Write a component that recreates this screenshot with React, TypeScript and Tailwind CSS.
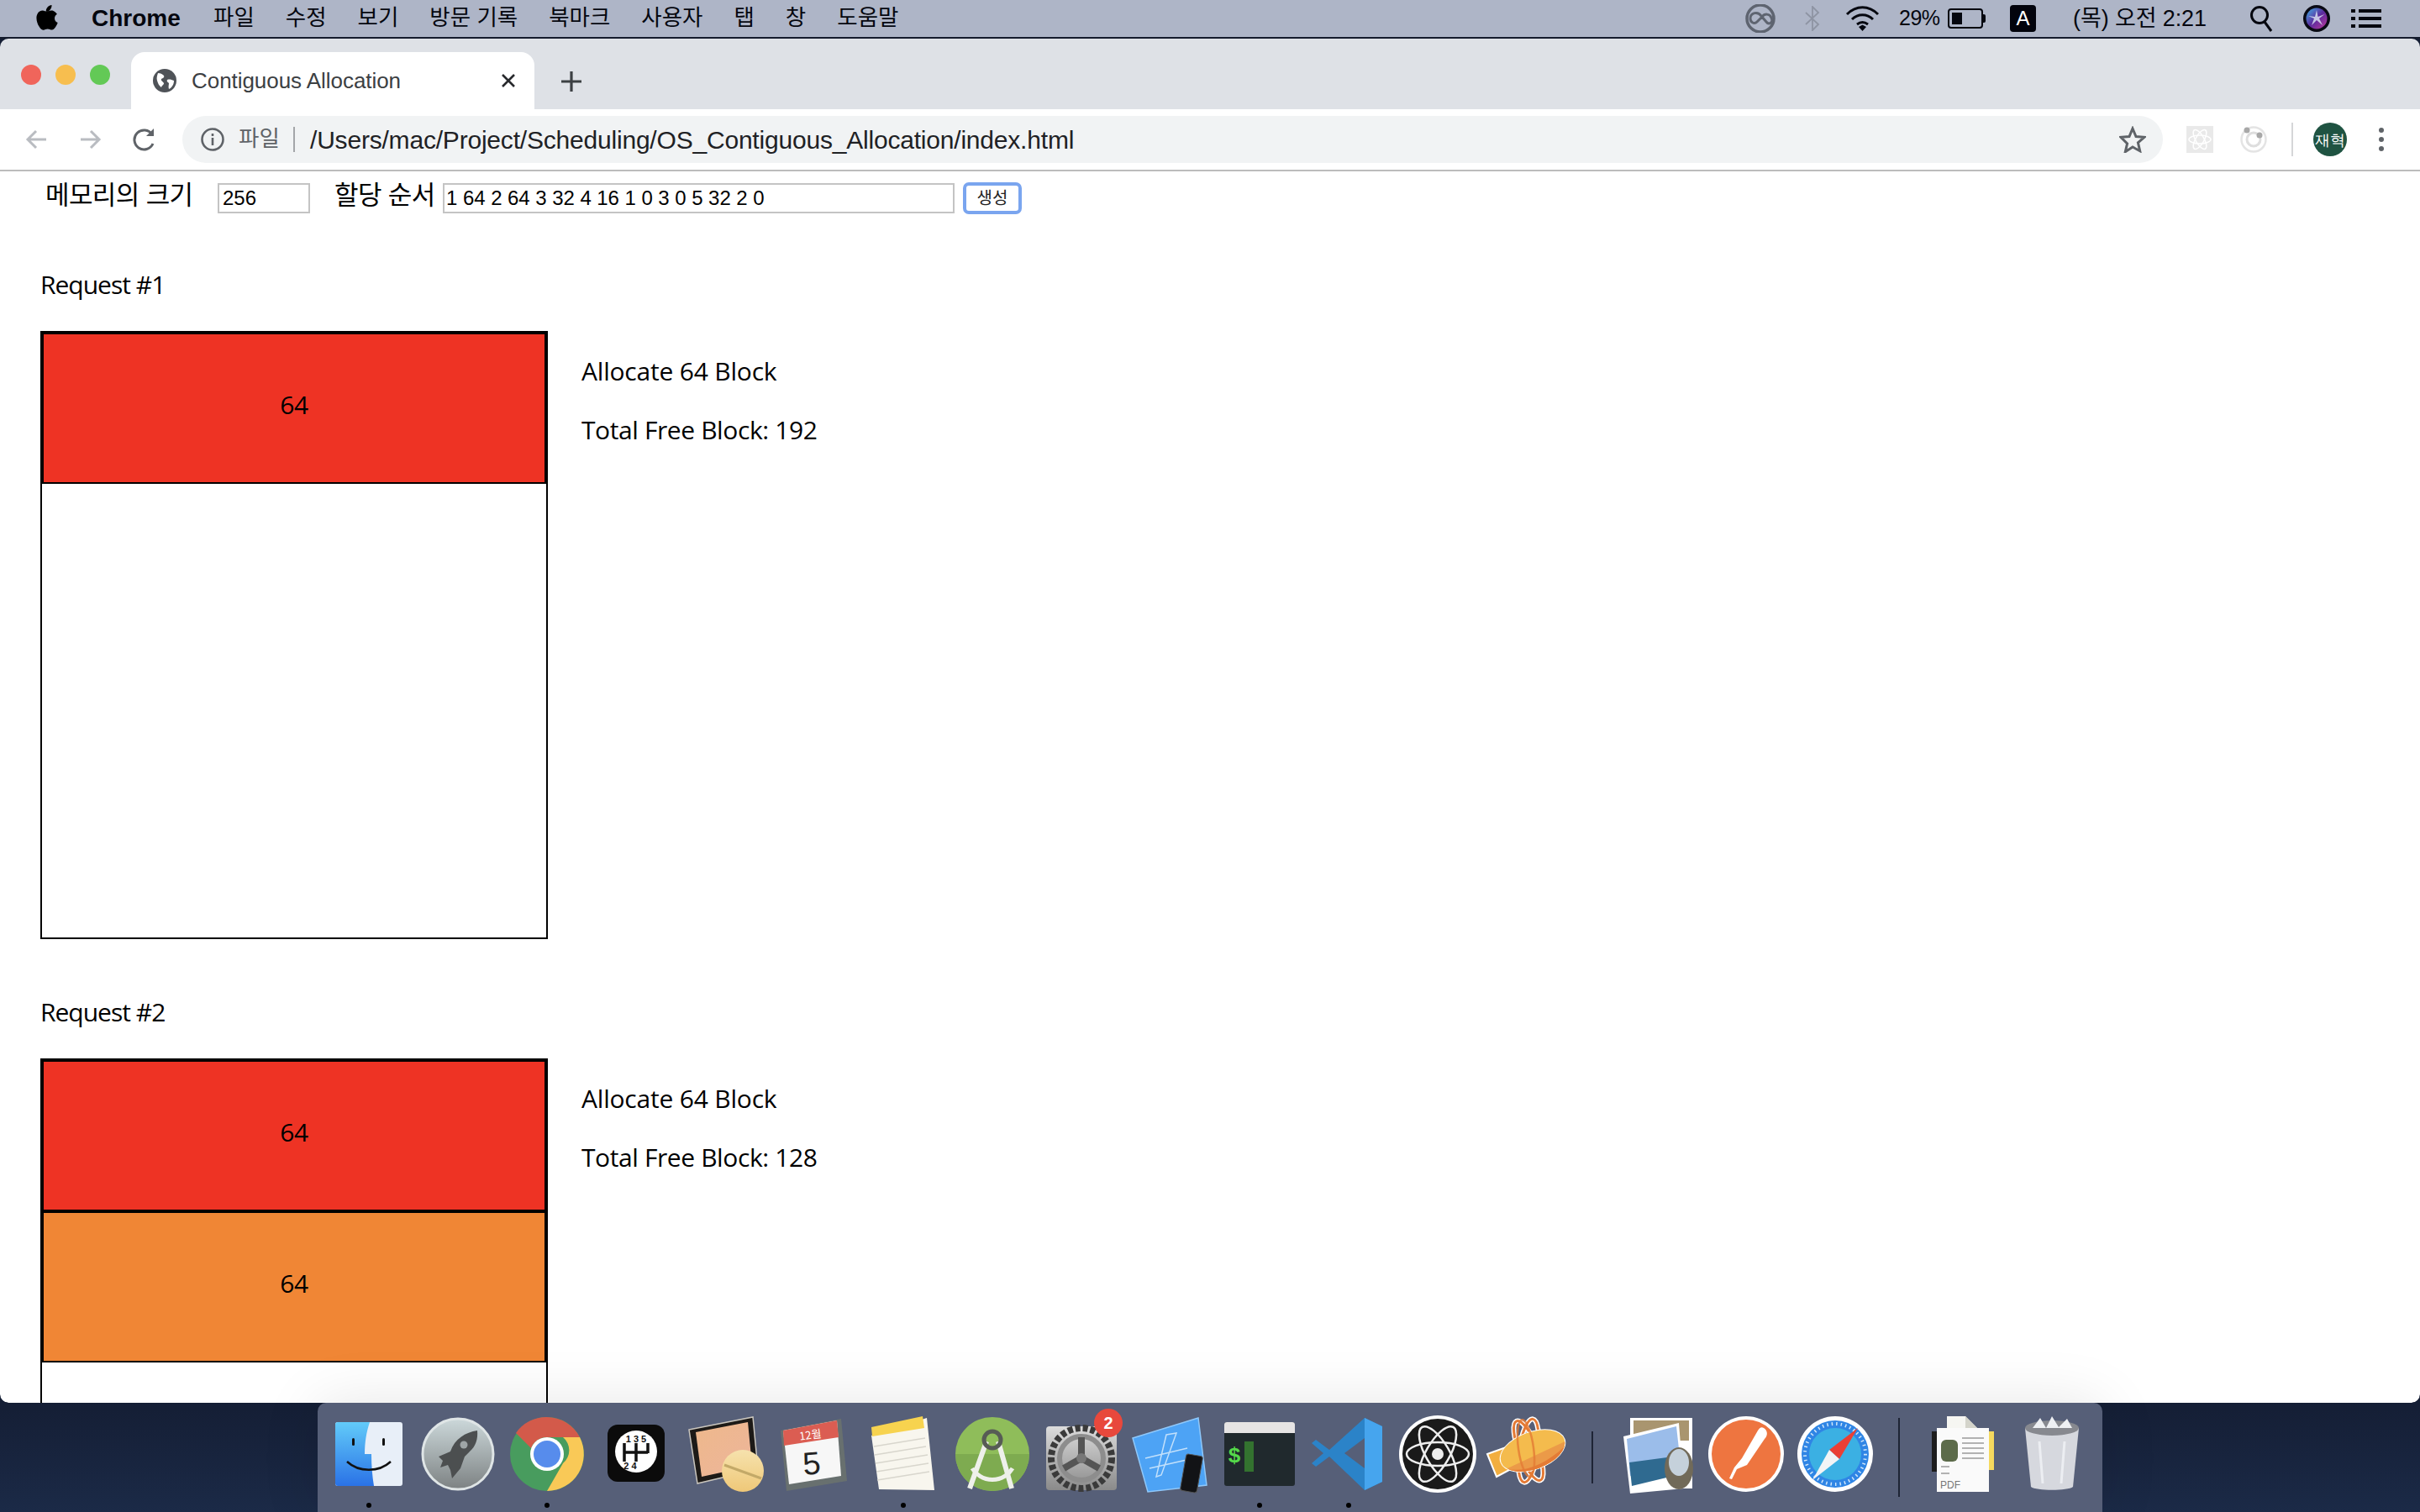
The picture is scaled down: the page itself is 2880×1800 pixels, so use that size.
import { ReactNode } from "react";

const sans = "font-['Open_Sans','Noto_Sans_CJK_KR',sans-serif]";
const ui = "font-['Liberation_Sans','Noto_Sans_CJK_KR',sans-serif]";

// ─── Menu bar ────────────────────────────────────────────────────────────────

const MENU = ["파일", "수정", "보기", "방문 기록", "북마크", "사용자", "탭", "창", "도움말"];

const AppleLogo = () => (
  <svg width="26" height="32" viewBox="0 0 26 32">
    <path d="M18.5 0c.2 2.2-.6 4-1.8 5.4-1.2 1.400-3 2.500-4.900 2.300-.2-2 .7-4 1.800-5.200C14.800 1.100 16.800.1 18.500 0zM24.900 10.800c-1.600 1-2.900 2.700-2.900 5 0 2.800 1.800 4.500 3.700 5.300-.5 1.500-1.200 3-2.200 4.500-1.300 2-2.700 4-4.800 4-2 0-2.600-1.200-5-1.200s-3.100 1.200-5 1.300C6.600 30 5 27.800 3.700 25.800 1 21.800-1 14.700 1.700 10.200 3 8 5.300 6.600 7.700 6.600c2 0 3.800 1.300 5 1.300s3.300-1.600 5.600-1.400c1 0 3.900.4 6.600 4.300z" fill="#000" />
  </svg>
);

const MenuBar = () => (
  <div className={`flex h-[44px] items-center bg-[#aeb5c7] text-[#05070f] ${ui}`}>
    <div className="ml-[43px] w-[66px]"><AppleLogo /></div>
    <span className="w-[108px] text-[28px] font-bold">Chrome</span>
    <div className="ml-[37px] flex gap-[37px] text-[26.500px]">
      {MENU.map((m) => (
        <span key={m} className="whitespace-nowrap">{m}</span>
      ))}
    </div>
    <div className="ml-auto flex items-center">
      <svg width="40" height="34" viewBox="0 0 40 34" fill="none" stroke="#5e6470" strokeWidth="4">
        <circle cx="20" cy="17" r="16" strokeWidth="3.500" /><path d="M8 17c0-7 9-9 13-3l6 7c3 4 9 1 6-5-2-5-8-5-11-1l-6 6c-3 3-8 1-8-4z" strokeWidth="3" />
      </svg>
      <svg className="ml-[32px]" width="19" height="30" viewBox="0 0 19 30" fill="none" stroke="#8e94a3" strokeWidth="1.800">
        <path d="M2 8l15 14-7 7V1l7 7L2 22" />
      </svg>
      <svg className="ml-[30px]" width="41" height="32" viewBox="0 0 41 32" fill="none" stroke="#05070f" strokeWidth="3">
        <path d="M2 11c11-11 26-11 37 0M8 17c7-7 18-7 25 0M14 23c4-3 9-3 13 0" />
        <path d="M16 26l4.500-2.500L25 26l-4.500 5z" fill="#05070f" stroke="none" />
      </svg>
      <span className="ml-[23px] w-[50px] text-[25px] tracking-[-0.5px]">29%</span>
      <div className="ml-[8px] flex items-center">
        <div className="flex h-[24px] w-[42px] rounded-[4px] border-2 border-[#05070f] p-[3px]">
          <div className="w-[12px] bg-[#05070f]" />
        </div>
        <div className="h-[10px] w-[3px] rounded-r-[2px] bg-[#05070f]" />
      </div>
      <div className="ml-[29px] flex h-[32px] w-[31px] items-center justify-center rounded-[4px] bg-[#02030c] text-[24px] font-normal leading-none text-white">A</div>
      <span className="ml-[44px] w-[165px] whitespace-nowrap text-[27px] tracking-[-0.1px]">(목) 오전 2:21</span>
      <svg className="ml-[45px]" width="28" height="32" viewBox="0 0 28 32" fill="none" stroke="#05070f" strokeWidth="3">
        <circle cx="12" cy="12" r="9.500" /><path d="M18 20l8 11" />
      </svg>
      <svg className="ml-[36px]" width="32" height="32" viewBox="0 0 32 32">
        <defs>
          <linearGradient id="siri" x1="0" y1="0" x2="1" y2="1">
            <stop offset="0" stopColor="#3fb4e8" /><stop offset="0.5" stopColor="#5b2b9e" /><stop offset="1" stopColor="#c0399b" />
          </linearGradient>
        </defs>
        <circle cx="16" cy="16" r="16" fill="#090a14" />
        <circle cx="16" cy="16" r="12.500" fill="url(#siri)" />
        <path d="M16 6l1.500 8 8-3-6.500 5 4 8-7-6-6 6 3-8-7-3 8 1z" fill="#dfeaf5" opacity="0.8" />
      </svg>
      <svg className="ml-[25px] mr-[46px]" width="36" height="22" viewBox="0 0 36 22" fill="#05070f">
        <rect y="0" width="5" height="4" /><rect x="9" y="0" width="27" height="4" />
        <rect y="9" width="5" height="4" /><rect x="9" y="9" width="27" height="4" />
        <rect y="18" width="5" height="4" /><rect x="9" y="18" width="27" height="4" />
      </svg>
    </div>
  </div>
);

// ─── Browser chrome ──────────────────────────────────────────────────────────

const Globe = () => (
  <svg width="28" height="28" viewBox="0 0 28 28">
    <circle cx="14" cy="14" r="14" fill="#4f5358" />
    <path d="M6 5c3 0 5 1 7 3 1 2-1 3-3 4-1 2 2 3 3 5 0 2-2 2-3 5-3-2-4-5-5-8-1-3 0-6 1-9zM17 13c3-1 5 0 8 1 0 4-2 8-6 10-1-3 0-5 0-7-1-1-3-2-2-4z" fill="#fff" />
  </svg>
);

const TabStrip = () => (
  <div className="flex h-[84px] items-end bg-[#dee1e6]">
    <div className="mb-[29px] ml-[25px] flex gap-[17px]">
      <div className="h-[24px] w-[24px] rounded-full bg-[#f0655b]" />
      <div className="h-[24px] w-[24px] rounded-full bg-[#f7be4f]" />
      <div className="h-[24px] w-[24px] rounded-full bg-[#63c956]" />
    </div>
    <div className="ml-[25px] flex h-[68px] w-[480px] items-center rounded-t-[16px] bg-white pl-[26px]">
      <Globe />
      <span className={`ml-[18px] w-[368px] whitespace-nowrap text-[26px] tracking-[-0.05px] text-[#3c4043] ${ui}`}>Contiguous Allocation</span>
      <svg width="18" height="18" viewBox="0 0 18 18" stroke="#27292c" strokeWidth="2.600">
        <path d="M2 2l14 14M16 2L2 16" />
      </svg>
    </div>
    <svg className="mb-[20px] ml-[31px]" width="26" height="26" viewBox="0 0 26 26" stroke="#3c4043" strokeWidth="3.200">
      <path d="M13 1v24M1 13h24" />
    </svg>
  </div>
);

const Arrow = ({ flip }: { flip?: boolean }) => (
  <svg className={flip ? "rotate-180" : ""} width="26" height="26" viewBox="0 0 26 26" fill="none" stroke="#b9bcc1" strokeWidth="3">
    <path d="M25 13H3M13 3L3 13l10 10" />
  </svg>
);

const Toolbar = () => (
  <div className="flex h-[74px] items-start border-b-2 border-[#bcbcbc] bg-white pt-[8px]">
    <div className="flex h-[56px] w-[217px] items-center pl-[30px]">
      <Arrow />
      <div className="ml-[39px]"><Arrow flip /></div>
      <svg className="ml-[37px]" width="28" height="28" viewBox="0 0 28 28" fill="none" stroke="#5f6368" strokeWidth="3">
        <path d="M24 19a11.500 11.500 0 1 1-1-11" /><path d="M25 1v9h-9" fill="#5f6368" stroke="none" />
      </svg>
    </div>
    <div className={`flex h-[56px] w-[2357px] items-center rounded-full bg-[#f1f3f4] pl-[22px] ${ui}`}>
      <svg width="28" height="28" viewBox="0 0 28 28" fill="none" stroke="#5f6368" strokeWidth="2.600">
        <circle cx="14" cy="14" r="12.500" /><path d="M14 12v9M14 7v3" />
      </svg>
      <span className="ml-[17px] w-[48px] whitespace-nowrap text-[26.500px] text-[#5f6368]">파일</span>
      <div className="ml-[17px] h-[30px] w-[2px] bg-[#a4a6a9]" />
      <span className="ml-[18px] whitespace-nowrap text-[30px] tracking-[-0.2px] text-[#202124]">/Users/mac/Project/Scheduling/OS_Contiguous_Allocation/index.html</span>
      <svg className="ml-auto mr-[20px]" width="32" height="32" viewBox="0 0 32 32" fill="none" stroke="#5f6368" strokeWidth="3">
        <path d="M16 3l4 9.500 10 .8-7.600 6.600 2.300 9.800L16 25l-8.700 5.700 2.300-9.800L2 13.300l10-.8z" />
      </svg>
    </div>
    <div className="flex h-[56px] flex-1 items-center pl-[28px]">
      <svg width="32" height="32" viewBox="0 0 32 32" fill="none">
        <rect width="32" height="32" fill="#e9e9e9" />
        <g stroke="#fff" strokeWidth="1.500">
          <ellipse cx="16" cy="16" rx="13" ry="5" /><ellipse cx="16" cy="16" rx="13" ry="5" transform="rotate(60 16 16)" /><ellipse cx="16" cy="16" rx="13" ry="5" transform="rotate(120 16 16)" />
        </g>
      </svg>
      <svg className="ml-[32px]" width="32" height="34" viewBox="0 0 32 34" fill="none">
        <circle cx="16" cy="17" r="14.500" stroke="#e4e4e4" strokeWidth="2.500" />
        <circle cx="16" cy="17" r="8" stroke="#dedede" strokeWidth="3" />
        <circle cx="8" cy="6" r="3.500" fill="#a8a8a8" /><circle cx="23" cy="12" r="3.500" fill="#a8a8a8" />
      </svg>
      <div className="ml-[29px] h-[40px] w-[2px] bg-[#d5d6d8]" />
      <div className="ml-[24px] flex h-[40px] w-[40px] items-center justify-center rounded-full bg-[#1f5342] text-[18px] font-medium text-white">재혁</div>
      <div className="ml-[38px] flex flex-col gap-[5px]">
        <div className="h-[6px] w-[6px] rounded-full bg-[#5f6368]" />
        <div className="h-[6px] w-[6px] rounded-full bg-[#5f6368]" />
        <div className="h-[6px] w-[6px] rounded-full bg-[#5f6368]" />
      </div>
    </div>
  </div>
);

// ─── Page content ────────────────────────────────────────────────────────────

const Block = ({ size, color }: { size: number; color: string }) => (
  <div className={`flex h-[180px] items-center justify-center border-2 border-black pb-[10px] text-[30px] tracking-[-0.5px] text-black ${color}`}>{size}</div>
);

const Request = ({ index, free, blocks }: { index: number; free: number; blocks: { size: number; color: string }[] }) => (
  <section className={`${sans} mb-[66px] text-[30px] text-black`}>
    <h2 className="h-[42px] text-[30px] font-normal leading-[42px] tracking-[-1px]">Request #{index}</h2>
    <div className="mt-[34px] flex">
      <div className="h-[724px] w-[604px] shrink-0 border-2 border-black">
        {blocks.map((b, i) => (
          <Block key={i} size={b.size} color={b.color} />
        ))}
      </div>
      <div className="ml-[40px] pt-[27px] leading-[42px]">
        <p className="tracking-[-0.2px]">Allocate 64 Block</p>
        <p className="mt-[28px] tracking-[-0.4px]">Total Free Block: {free}</p>
      </div>
    </div>
  </section>
);

const Page = () => (
  <div className="flex-1 overflow-hidden rounded-b-[10px] bg-white pl-[48px]">
    <div className={`flex h-[64px] items-center text-[#000] ${ui}`}>
      <span className="mb-[6px] ml-[6px] w-[205px] whitespace-nowrap text-[31px] tracking-[-0.6px]">메모리의 크기</span>
      <input readOnly value="256" className="h-[36px] w-[110px] border-2 border-[#c4c4c4] bg-white pl-[4px] text-[24px] outline-none" />
      <span className="mb-[6px] ml-[29px] w-[129px] whitespace-nowrap text-[31px] tracking-[-0.6px]">할당 순서</span>
      <input readOnly value="1 64 2 64 3 32 4 16 1 0 3 0 5 32 2 0" className="h-[36px] w-[609px] border-2 border-[#c4c4c4] bg-white pl-[2px] text-[24px] tracking-[-0.05px] outline-none" />
      <button className="ml-[10px] h-[38px] w-[70px] rounded-[7px] border-[4px] border-[#7aa5ef] bg-white text-[20px] text-[#222]">생성</button>
    </div>
    <div className="pt-[50px]">
      <Request index={1} free={192} blocks={[{ size: 64, color: "bg-[#ee3324]" }]} />
      <Request index={2} free={128} blocks={[{ size: 64, color: "bg-[#ee3324]" }, { size: 64, color: "bg-[#f08635]" }]} />
    </div>
  </div>
);

// ─── Dock icons ──────────────────────────────────────────────────────────────

const Icon = ({ children }: { children: ReactNode }) => (
  <svg width="90" height="90" viewBox="0 0 90 90" fill="none" className="overflow-visible">{children}</svg>
);

const Finder = () => (
  <Icon>
    <defs>
      <linearGradient id="finderBlue" x1="0" y1="0" x2="0" y2="1">
        <stop offset="0" stopColor="#62cbf9" /><stop offset="1" stopColor="#2a72e6" />
      </linearGradient>
    </defs>
    <rect x="5" y="7" width="80" height="76" rx="3" fill="#e8eff8" />
    <path d="M8 7h38c-4 12-6 24-6 38h8c0 14 1 26 3 38H8a3 3 0 0 1-3-3V10a3 3 0 0 1 3-3z" fill="url(#finderBlue)" />
    <rect x="25" y="26" width="3" height="9" rx="1.500" fill="#111" /><rect x="61" y="26" width="3" height="9" rx="1.500" fill="#111" />
    <path d="M19 54c14 13 38 13 52 0" stroke="#111" strokeWidth="2.500" />
  </Icon>
);

const Launchpad = () => (
  <Icon>
    <defs>
      <linearGradient id="padGray" x1="0" y1="0" x2="0" y2="1">
        <stop offset="0" stopColor="#ccd8da" /><stop offset="1" stopColor="#7d8283" />
      </linearGradient>
    </defs>
    <circle cx="45" cy="45" r="42" fill="url(#padGray)" stroke="#dfe5e6" strokeWidth="3" />
    <path d="M68 17c-14 2-27 10-32 25l-14 6 5 5-3 8 9-3 3 6 2 10 10-12 5-14 6-6c7-6 10-15 9-25z" fill="#4c4f50" />
    <circle cx="52" cy="34" r="4.500" fill="#9ea5a6" />
  </Icon>
);

const Chrome = () => (
  <Icon>
    <circle cx="45" cy="45" r="44" fill="#489c5e" />
    <path d="M45 1a44 44 0 0 1 39 24H45a20 20 0 0 0-19 13L8 20A44 44 0 0 1 45 1z" fill="#d35a4a" />
    <path d="M84 25a44 44 0 0 1-39 64l19-33a20 20 0 0 0 0-31z" fill="#f9c957" />
    <circle cx="45" cy="45" r="20" fill="#fff" /><circle cx="45" cy="45" r="16" fill="#578cec" />
  </Icon>
);

const Shifter = () => (
  <Icon>
    <rect x="11" y="10" width="68" height="68" rx="12" fill="#0b0b0b" />
    <circle cx="45" cy="42" r="25" fill="#fff" />
    <path d="M31 32v22M45 32v22M59 32v12M31 43h28" stroke="#111" strokeWidth="3.500" />
    <text x="45" y="31" textAnchor="middle" fontSize="11" fontWeight="700" fill="#111" fontFamily="Liberation Sans">1 3 5</text>
    <text x="38" y="63" textAnchor="middle" fontSize="11" fontWeight="700" fill="#111" fontFamily="Liberation Sans">2 4</text>
  </Icon>
);

const Pill = () => (
  <Icon>
    <defs>
      <linearGradient id="pillPeach" x1="0" y1="0" x2="1" y2="1">
        <stop offset="0" stopColor="#eeb88b" /><stop offset="1" stopColor="#edb59b" />
      </linearGradient>
      <linearGradient id="pillTab" x1="0" y1="0" x2="0" y2="1">
        <stop offset="0" stopColor="#f6e2ad" /><stop offset="1" stopColor="#efc878" />
      </linearGradient>
    </defs>
    <path d="M2 16L78 1l6 62-72 17z" fill="#1d1a17" stroke="#c9c5bd" strokeWidth="1.500" />
    <path d="M10 19l62-12 5 52-60 13z" fill="url(#pillPeach)" />
    <circle cx="66" cy="65" r="25" fill="url(#pillTab)" />
    <path d="M44 58l44 16" stroke="#c3a968" strokeWidth="3" />
  </Icon>
);

const Calendar = () => (
  <Icon>
    <path d="M5 17l72-14 7 74-72 12z" fill="#68706f" />
    <path d="M8 17l64-12 5 66-62 10z" fill="#f7f7f7" />
    <path d="M8 17l64-12 2 20-65 10z" fill="#db5d52" />
    <text x="41" y="27" textAnchor="middle" fontSize="13" fill="#fff" fontFamily="Noto Sans CJK KR" transform="rotate(-8 41 27)">12월</text>
    <text x="43" y="69" textAnchor="middle" fontSize="38" fill="#222" fontFamily="Liberation Sans" transform="rotate(-5 43 69)">5</text>
  </Icon>
);

const Notes = () => (
  <Icon>
    <path d="M7 23L73 2l9 86-66-1z" fill="#f8f6ee" />
    <path d="M7 13l61-13 2 14-62 10z" fill="#f7d34f" />
    <path d="M10 36l61-10M11 46l61-10M12 56l62-10M13 66l62-10M14 76l62-10" stroke="#d8d6cd" strokeWidth="1.500" />
  </Icon>
);

const AndroidStudio = () => (
  <Icon>
    <circle cx="45" cy="45" r="44" fill="#8fbd5a" />
    <path d="M1 45h88a44 44 0 0 1-88 0z" fill="#7eab50" />
    <path d="M38 30L18 86M52 30l16 56" stroke="#eef0ea" strokeWidth="6" />
    <circle cx="45" cy="28" r="10" stroke="#575c55" strokeWidth="5" />
    <path d="M21 62a28 28 0 0 0 48 0" stroke="#eef0ea" strokeWidth="5" />
  </Icon>
);

const SystemPrefs = () => (
  <Icon>
    <defs>
      <linearGradient id="prefGray" x1="0" y1="0" x2="0" y2="1">
        <stop offset="0" stopColor="#dcdcdc" /><stop offset="1" stopColor="#8a8a8a" />
      </linearGradient>
    </defs>
    <rect x="3" y="12" width="84" height="76" rx="4" fill="url(#prefGray)" />
    <circle cx="45" cy="50" r="36" stroke="#3a3a3a" strokeWidth="8" strokeDasharray="6 3" />
    <circle cx="45" cy="50" r="26" stroke="#8d8d8d" strokeWidth="6" />
    <path d="M45 50V25M45 50L24 62M45 50l21 12" stroke="#555" strokeWidth="8" />
    <circle cx="45" cy="50" r="6" fill="#777" />
  </Icon>
);

const Xcode = () => (
  <Icon>
    <path d="M0 26L78 2l10 80-70 8z" fill="#4da3f5" stroke="#8fc8fa" strokeWidth="1.500" />
    <path d="M40 22l12-2-18 50-6 2zM15 50l50-12M20 62l44-10" stroke="#c2e0fb" strokeWidth="1.500" />
    <rect x="60" y="46" width="20" height="44" rx="3" transform="rotate(10 70 68)" fill="#121316" stroke="#555" strokeWidth="1" />
  </Icon>
);

const Terminal = () => (
  <Icon>
    <rect x="3" y="7" width="84" height="76" rx="3" fill="#20292d" />
    <path d="M3 10a3 3 0 0 1 3-3h78a3 3 0 0 1 3 3v10H3z" fill="#e6e4e4" />
    <rect x="27" y="30" width="11" height="36" fill="#33722f" />
    <text x="15" y="55" textAnchor="middle" fontSize="26" fontWeight="700" fill="#55d94a" fontFamily="Liberation Mono">$</text>
  </Icon>
);

const VSCode = () => (
  <Icon>
    <path d="M64 2l21 10v66l-21 10L22 48 6 60 1 56l14-12L1 32l5-4 16 12z" fill="#2b83c8" />
    <path d="M64 2l21 10v66l-21 10z" fill="#46a5ee" />
    <path d="M64 26L40 44l24 18z" fill="#565f78" />
  </Icon>
);

const Atom = () => (
  <Icon>
    <circle cx="45" cy="45" r="46" fill="#fff" /><circle cx="45" cy="45" r="42" fill="#1a1a1a" />
    <g stroke="#eee" strokeWidth="2.500">
      <ellipse cx="45" cy="45" rx="37" ry="14" /><ellipse cx="45" cy="45" rx="37" ry="14" transform="rotate(60 45 45)" /><ellipse cx="45" cy="45" rx="37" ry="14" transform="rotate(120 45 45)" />
    </g>
    <circle cx="45" cy="45" r="7" fill="#eee" />
  </Icon>
);

const Zeppelin = () => (
  <Icon>
    <defs>
      <clipPath id="zepBody">
        <ellipse cx="52" cy="41" rx="40" ry="22" transform="rotate(-20 52 41)" />
      </clipPath>
    </defs>
    <g stroke="#fff" strokeWidth="6">
      <ellipse cx="47" cy="41" rx="11" ry="38" transform="rotate(-22 47 41)" />
      <ellipse cx="47" cy="41" rx="11" ry="38" transform="rotate(8 47 41)" />
    </g>
    <path d="M-2 45l22-8 6 26L9 72z" fill="#f2ae3f" stroke="#fff" strokeWidth="2" />
    <g stroke="#e47a35" strokeWidth="3">
      <ellipse cx="47" cy="41" rx="11" ry="38" transform="rotate(-22 47 41)" />
      <ellipse cx="47" cy="41" rx="11" ry="38" transform="rotate(8 47 41)" />
    </g>
    <ellipse cx="52" cy="41" rx="41" ry="23" transform="rotate(-20 52 41)" fill="#fff" />
    <g clipPath="url(#zepBody)">
      <rect x="0" y="0" width="100" height="90" fill="#f4bb4d" />
      <path d="M5 70L95 28v40H5z" fill="#eb9a48" />
      <path d="M10 58c20 12 50 6 80-22v40H10z" fill="#e47b35" />
    </g>
    <ellipse cx="44" cy="38" rx="9" ry="34" transform="rotate(-8 44 38)" stroke="#e47a35" strokeWidth="2.500" opacity="0.8" />
  </Icon>
);

const Preview = () => (
  <Icon>
    <rect x="13" y="2" width="74" height="84" fill="#fff" /><rect x="17" y="5" width="66" height="24" fill="#a9956f" />
    <path d="M5 24l66-16 6 78-64 6z" fill="#fff" />
    <path d="M9 27l59-15 5 45-60 14z" fill="#9bbdea" />
    <path d="M12 55l60-8 1 22-58 14z" fill="#2f6a90" />
    <ellipse cx="71" cy="62" rx="17" ry="25" fill="#716a59" /><ellipse cx="71" cy="55" rx="12" ry="16" fill="#c5d1db" />
  </Icon>
);

const Postman = () => (
  <Icon>
    <circle cx="45" cy="45" r="45" fill="#fff" /><circle cx="45" cy="45" r="41" fill="#ee7540" />
    <path d="M66 14c5 3 5 9 1 13L46 58l-12 5-6 12-3-1 6-13 9-11 19-33c2-3 4-5 7-3z" fill="#fff" />
  </Icon>
);

const Safari = () => (
  <Icon>
    <circle cx="45" cy="45" r="45" fill="#fff" /><circle cx="45" cy="45" r="40" fill="#2f85e5" />
    <circle cx="45" cy="45" r="31" fill="#3bb0e3" />
    <circle cx="45" cy="45" r="36" stroke="#cfe6fa" strokeWidth="4" strokeDasharray="1.500 4" />
    <path d="M72 14L50 51 38 40z" fill="#ea3f35" /><path d="M18 76l32-25-12-11z" fill="#f2f4f6" />
  </Icon>
);

const PdfStack = () => (
  <Icon>
    <path d="M26 0h22l20 20v44H26z" fill="#f6f6f2" /><path d="M48 0l20 20H48z" fill="#d4d4ca" />
    <rect x="58" y="18" width="24" height="46" fill="#f5d95e" />
    <rect x="8" y="18" width="58" height="48" fill="#1d1d1d" />
    <rect x="14" y="14" width="62" height="76" fill="#fafafa" />
    <rect x="19" y="28" width="20" height="26" rx="6" fill="#5c6b4a" />
    <path d="M44 26h26M44 32h26M44 38h26M44 44h26M44 50h26M19 60h10M19 68h10" stroke="#9a9a9a" strokeWidth="1.500" />
    <text x="18" y="86" fontSize="12" fill="#777" fontFamily="Liberation Sans">PDF</text>
  </Icon>
);

const Trash = () => (
  <Icon>
    <path d="M13 14h64l-7 70c-6 5-44 5-50 0z" fill="#d6d8de" />
    <ellipse cx="45" cy="14" rx="32" ry="9" fill="#87898f" />
    <path d="M22 14l9-12 7 12 7-14 8 13 10-10 6 11" fill="#eef0f3" />
    <path d="M30 30l4 50M60 30l-4 50" stroke="#eceef2" strokeWidth="3" />
  </Icon>
);

// ─── Dock ────────────────────────────────────────────────────────────────────

const DockItem = ({ running, badge, children }: { running?: boolean; badge?: string; children: ReactNode }) => (
  <div className="relative flex w-[106px] flex-col items-center">
    {children}
    <div className={`mt-[13px] h-[6px] w-[6px] rounded-full ${running ? "bg-black" : "bg-transparent"}`} />
    {badge && (
      <div className={`absolute left-[68px] top-[-9px] flex h-[34px] w-[34px] items-center justify-center rounded-full bg-[#e8483c] text-[20px] font-bold text-white ${ui}`}>{badge}</div>
    )}
  </div>
);

const Dock = () => (
  <div className="relative z-10 mx-[378px] flex h-[130px] rounded-t-[10px] bg-[#565f78] pl-[8px] pt-[16px] shadow-[0_0_70px_rgba(0,0,0,0.1)]">
    <DockItem running><Finder /></DockItem>
    <DockItem><Launchpad /></DockItem>
    <DockItem running><Chrome /></DockItem>
    <DockItem><Shifter /></DockItem>
    <DockItem><Pill /></DockItem>
    <DockItem><Calendar /></DockItem>
    <DockItem running><Notes /></DockItem>
    <DockItem><AndroidStudio /></DockItem>
    <DockItem badge="2"><SystemPrefs /></DockItem>
    <DockItem><Xcode /></DockItem>
    <DockItem running><Terminal /></DockItem>
    <DockItem running><VSCode /></DockItem>
    <DockItem><Atom /></DockItem>
    <DockItem><Zeppelin /></DockItem>
    <div className="flex w-[49px] justify-center pt-[18px]"><div className="h-[62px] w-[2px] bg-[#1e2435]" /></div>
    <DockItem><Preview /></DockItem>
    <DockItem><Postman /></DockItem>
    <DockItem><Safari /></DockItem>
    <div className="flex w-[46px] justify-center pt-[2px]"><div className="h-[94px] w-[2px] bg-[#1e2435]" /></div>
    <DockItem><PdfStack /></DockItem>
    <DockItem><Trash /></DockItem>
  </div>
);

export default function App() {
  return (
    <div className="flex h-[1800px] w-[2880px] flex-col overflow-hidden bg-linear-to-b from-[#141d33] from-[92%] to-[#1b2a47]">
      <MenuBar />
      <div className="flex h-[1626px] flex-col border-t-2 border-[#141b2d]">
        <div className="flex h-full flex-col overflow-hidden rounded-[10px]">
          <TabStrip />
          <Toolbar />
          <Page />
        </div>
      </div>
      <Dock />
    </div>
  );
}
